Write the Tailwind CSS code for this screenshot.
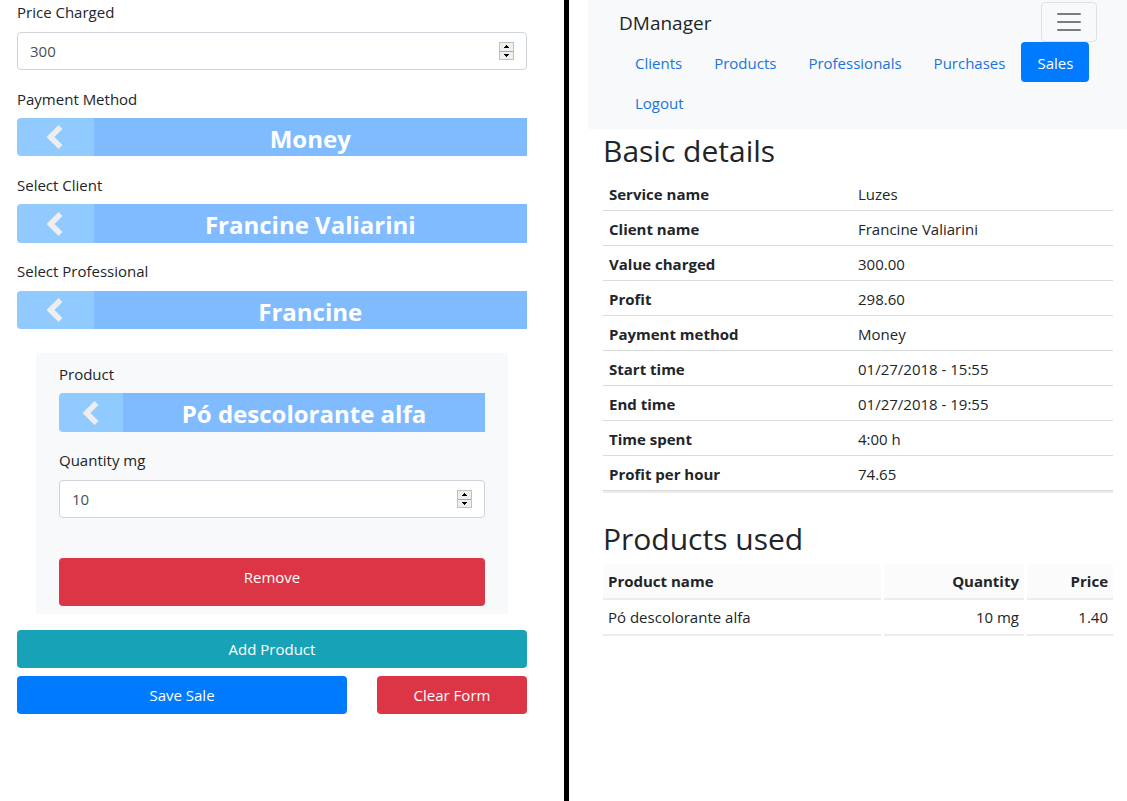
<!DOCTYPE html>
<html lang="en">
<head>
<meta charset="utf-8">
<meta name="viewport" content="width=device-width, initial-scale=1">
<title>DManager</title>
<script src="https://cdn.jsdelivr.net/npm/@tailwindcss/browser@4"></script>
</head>
<body class="flex min-h-screen bg-white font-['Open_Sans','Noto_Sans',sans-serif] text-[15px] leading-6 text-[#212529]">

<div class="min-w-0 flex-[564]">
<form class="pr-[37px] pb-4 pl-[17px]">
  <div class="mb-[17px]">
    <label for="price" class="mb-2 block">Price Charged</label>
    <div class="relative">
      <input id="price" type="number" value="300" class="block h-[38px] w-full rounded border border-[#ced4da] bg-white px-3 text-[#495057] [appearance:textfield]">
      <div class="absolute right-[13px] top-[10px] flex h-[18px] w-[15px] flex-col border border-[#c0c0c0] bg-[#a9a9a9]">
        <button type="button" aria-label="Increase price" class="flex flex-1 items-center justify-center bg-[#efefef]"><svg class="h-[3px] w-[5px]" viewBox="0 0 5 3" shape-rendering="crispEdges"><path d="M2 0h1v1h1v1h1v1H0V2h1V1h1z"/></svg></button>
        <button type="button" aria-label="Decrease price" class="mt-px flex flex-1 items-center justify-center bg-[#efefef]"><svg class="h-[3px] w-[5px]" viewBox="0 0 5 3" shape-rendering="crispEdges"><path d="M0 0h5v1H4v1H3v1H2V2H1V1H0z"/></svg></button>
      </div>
    </div>
  </div>

  <div class="mb-[17px]">
    <label for="payment" class="mb-[7px] block">Payment Method</label>
    <div class="flex h-[38px] overflow-hidden rounded-l">
      <button type="button" aria-label="Change payment method" class="flex w-[15%] items-center justify-center bg-[#90caff]"><svg class="h-6 w-4" viewBox="0 0 16 24"><path d="M13.500 2 3.500 12l10 10" fill="none" stroke="#eee" stroke-width="5.500"/></svg></button>
      <output id="payment" class="flex-1 bg-[#80bbff] text-center text-2xl leading-[42px] font-bold text-white">Money</output>
    </div>
  </div>

  <div class="mb-4">
    <label for="client" class="mb-[7px] block">Select Client</label>
    <div class="flex h-[39px] overflow-hidden rounded-l">
      <button type="button" aria-label="Change client" class="flex w-[15%] items-center justify-center bg-[#90caff]"><svg class="h-6 w-4" viewBox="0 0 16 24"><path d="M13.500 2 3.500 12l10 10" fill="none" stroke="#eee" stroke-width="5.500"/></svg></button>
      <output id="client" class="flex-1 bg-[#80bbff] text-center text-2xl leading-[42px] font-bold text-white">Francine Valiarini</output>
    </div>
  </div>

  <div class="mb-6">
    <label for="professional" class="mb-2 block">Select Professional</label>
    <div class="flex h-[38px] overflow-hidden rounded-l">
      <button type="button" aria-label="Change professional" class="flex w-[15%] items-center justify-center bg-[#90caff]"><svg class="h-6 w-4" viewBox="0 0 16 24"><path d="M13.500 2 3.500 12l10 10" fill="none" stroke="#eee" stroke-width="5.500"/></svg></button>
      <output id="professional" class="flex-1 bg-[#80bbff] text-center text-2xl leading-[42px] font-bold text-white">Francine</output>
    </div>
  </div>

  <section class="mx-[19px] mb-4 bg-[#f8f9fa] px-[23px] pt-[9px] pb-2">
    <div class="mb-4">
      <label for="product" class="mb-[7px] block">Product</label>
      <div class="flex h-[39px] overflow-hidden rounded-l">
        <button type="button" aria-label="Change product" class="flex w-[15%] items-center justify-center bg-[#90caff]"><svg class="h-6 w-4" viewBox="0 0 16 24"><path d="M13.500 2 3.500 12l10 10" fill="none" stroke="#eee" stroke-width="5.500"/></svg></button>
        <output id="product" class="flex-1 bg-[#80bbff] text-center text-2xl leading-[42px] font-bold text-white">Pó descolorante alfa</output>
      </div>
    </div>
    <div class="mb-10">
      <label for="quantity" class="mb-2 block">Quantity mg</label>
      <div class="relative">
        <input id="quantity" type="number" value="10" class="block h-[38px] w-full rounded border border-[#ced4da] bg-white px-3 text-[#495057] [appearance:textfield]">
        <div class="absolute right-[13px] top-[10px] flex h-[18px] w-[15px] flex-col border border-[#c0c0c0] bg-[#a9a9a9]">
          <button type="button" aria-label="Increase quantity" class="flex flex-1 items-center justify-center bg-[#efefef]"><svg class="h-[3px] w-[5px]" viewBox="0 0 5 3" shape-rendering="crispEdges"><path d="M2 0h1v1h1v1h1v1H0V2h1V1h1z"/></svg></button>
          <button type="button" aria-label="Decrease quantity" class="mt-px flex flex-1 items-center justify-center bg-[#efefef]"><svg class="h-[3px] w-[5px]" viewBox="0 0 5 3" shape-rendering="crispEdges"><path d="M0 0h5v1H4v1H3v1H2V2H1V1H0z"/></svg></button>
        </div>
      </div>
    </div>
    <button type="button" class="block w-full rounded bg-[#dc3545] pt-[7px] pb-[17px] text-white">Remove</button>
  </section>

  <button type="button" class="mb-2 block h-[38px] w-full rounded bg-[#17a2b8] text-white">Add Product</button>
  <div class="flex gap-[30px]">
    <button type="submit" class="h-[38px] flex-[330] rounded bg-[#007bff] text-white">Save Sale</button>
    <button type="reset" class="h-[38px] flex-[150] rounded bg-[#dc3545] text-white">Clear Form</button>
  </div>
</form>
</div>

<div class="w-[5px] shrink-0 bg-black"></div>

<div class="ml-[19px] min-w-0 flex-[539]">
  <nav class="bg-[#f8f9fa] pt-0.5 pr-[30px] pb-[7px] pl-[31px]">
    <div class="flex items-center justify-between">
      <a href="#" class="pt-0.5 text-[19px] leading-8">DManager</a>
      <button type="button" aria-label="Toggle navigation" class="flex h-10 w-14 items-center justify-center rounded border border-[#dfe0e1]"><svg class="h-[30px] w-[30px]" viewBox="0 0 30 30"><path d="M4 7h22M4 15h22M4 23h22" stroke="#7b7c7d" stroke-width="2" stroke-linecap="round"/></svg></button>
    </div>
    <ul class="flex flex-wrap text-[#1a73e0]">
      <li><a href="#" class="block rounded px-4 pt-[9px] pb-[7px]">Clients</a></li>
      <li><a href="#" class="block rounded px-4 pt-[9px] pb-[7px]">Products</a></li>
      <li><a href="#" class="block rounded px-4 pt-[9px] pb-[7px]">Professionals</a></li>
      <li><a href="#" class="block rounded px-4 pt-[9px] pb-[7px]">Purchases</a></li>
      <li><a href="#" aria-current="page" class="block rounded bg-[#007bff] px-4 pt-[9px] pb-[7px] text-white">Sales</a></li>
      <li><a href="#" class="block rounded px-4 pt-[9px] pb-[7px]">Logout</a></li>
    </ul>
  </nav>

  <main class="pr-3.5 pl-[15px]">
    <h2 class="pt-[3px] pb-1.5 text-3xl leading-[38px]">Basic details</h2>
    <div class="border-b-2 border-[#ebecec]">
      <table class="w-full table-fixed border-separate border-spacing-0 text-left">
        <tbody class="[&_td]:h-[35px] [&_td]:border-b [&_td]:border-[#d9dbdd] [&_td]:px-1.5 [&_td]:pt-0.5 [&_th]:border-b [&_th]:border-[#d9dbdd] [&_th]:px-1.5 [&_th]:pt-0.5">
          <tr><th scope="row" class="w-[249px]">Service name</th><td>Luzes</td></tr>
          <tr><th scope="row">Client name</th><td>Francine Valiarini</td></tr>
          <tr><th scope="row">Value charged</th><td>300.00</td></tr>
          <tr><th scope="row">Profit</th><td>298.60</td></tr>
          <tr><th scope="row">Payment method</th><td>Money</td></tr>
          <tr><th scope="row">Start time</th><td>01/27/2018 - 15:55</td></tr>
          <tr><th scope="row">End time</th><td>01/27/2018 - 19:55</td></tr>
          <tr><th scope="row">Time spent</th><td>4:00 h</td></tr>
          <tr><th scope="row">Profit per hour</th><td>74.65</td></tr>
        </tbody>
      </table>
    </div>

    <h2 class="pt-[27px] pb-1.5 text-3xl leading-[38px]">Products used</h2>
    <div class="-mx-[3px]">
      <table class="w-full table-fixed border-separate border-spacing-x-[3px] border-spacing-y-0">
        <thead class="[&_th]:h-9 [&_th]:border-b-2 [&_th]:border-[#ebecec] [&_th]:bg-[#fbfbfb] [&_th]:px-[5px]">
          <tr><th scope="col" class="text-left">Product name</th><th scope="col" class="w-[140px] text-right">Quantity</th><th scope="col" class="w-[86px] text-right">Price</th></tr>
        </thead>
        <tbody class="[&_td]:h-9 [&_td]:border-b-2 [&_td]:border-[#ebecec] [&_td]:px-[5px]">
          <tr><td>Pó descolorante alfa</td><td class="text-right">10 mg</td><td class="text-right">1.40</td></tr>
        </tbody>
      </table>
    </div>
  </main>
</div>
</body>
</html>
